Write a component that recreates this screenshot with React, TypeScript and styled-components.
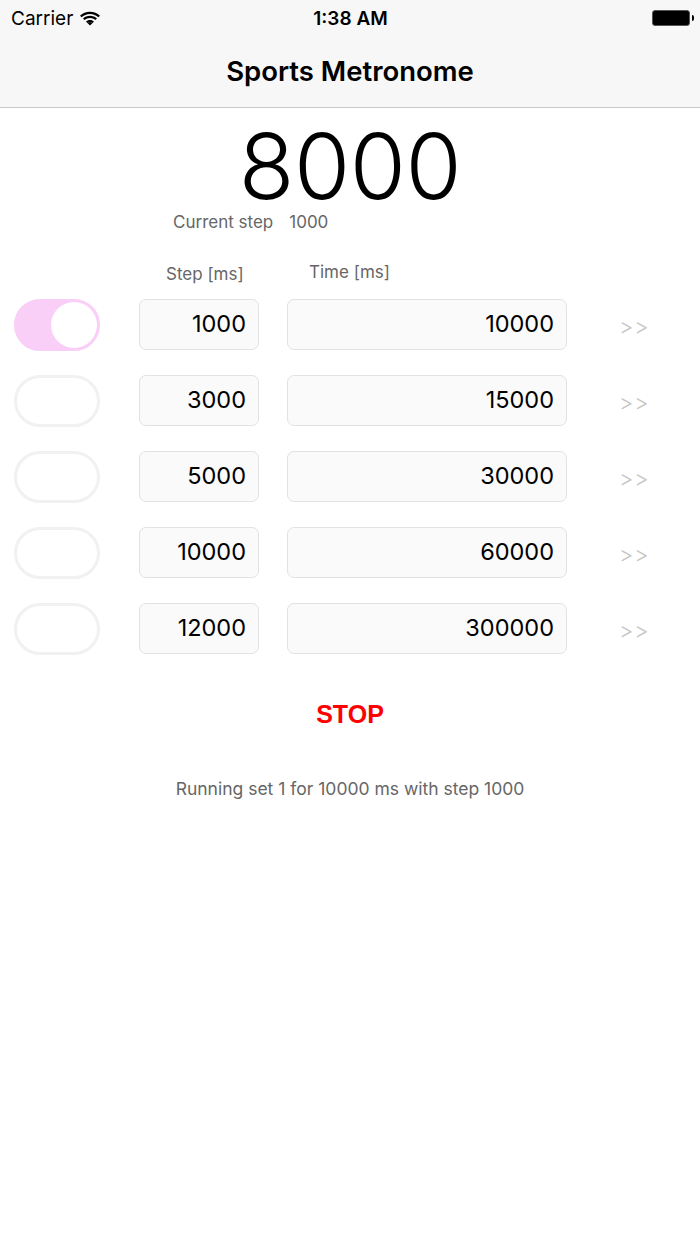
import React from "react";
import styled, { createGlobalStyle } from "styled-components";

const GlobalStyle = createGlobalStyle`
  body {
    margin: 0;
    background: #ffffff;
    font-family: Inter, "Liberation Sans", sans-serif;
  }
`;

const Screen = styled.div`
  width: 700px;
  min-height: 1244px;
  background: #fff;
`;

const Header = styled.div`
  background: #f7f7f7;
  border-bottom: 1px solid #c8c8c8;
  height: 107px;
  display: flex;
  flex-direction: column;
`;

const StatusBar = styled.div`
  height: 36px;
  display: grid;
  grid-template-columns: 1fr auto 1fr;
  align-items: center;
  padding: 0 10px 0 11px;
  font-size: 19px;
  color: #000;
`;

const Carrier = styled.div`
  display: flex;
  align-items: center;
  gap: 7px;
`;

const Clock = styled.div`
  font-weight: 600;
`;

const BatteryWrap = styled.div`
  display: flex;
  justify-content: flex-end;
  align-items: center;
`;

const Battery = styled.div`
  width: 36px;
  height: 14px;
  border: 1.5px solid #555;
  border-radius: 3px;
  background: #000;
  position: relative;
  &::after {
    content: "";
    position: absolute;
    right: -5px;
    top: 4px;
    width: 2px;
    height: 6px;
    background: #000;
    border-radius: 0 2px 2px 0;
  }
`;

const NavTitle = styled.div`
  flex: 1;
  display: flex;
  align-items: center;
  justify-content: center;
  font-size: 27.5px;
  font-weight: 600;
  color: #000;
  padding-bottom: 2px;
`;

const Counter = styled.div`
  text-align: center;
  font-size: 91px;
  font-weight: 300;
  line-height: 92px;
  height: 92px;
  padding-top: 12px;
  letter-spacing: -0.5px;
`;

const StepInfo = styled.div`
  display: flex;
  gap: 16px;
  padding-left: 173px;
  font-size: 17px;
  line-height: 20px;
  color: #666;
`;

const ColumnHeads = styled.div`
  display: flex;
  align-items: flex-start;
  padding-left: 166px;
  margin-top: 30px;
  font-size: 17px;
  color: #666;
`;

const ColHead = styled.div<{ $shift?: number; $width: number }>`
  width: ${(p) => p.$width}px;
  margin-top: ${(p) => p.$shift ?? 0}px;
`;

const Rows = styled.div`
  display: flex;
  flex-direction: column;
  gap: 25px;
  margin-top: 15px;
  padding-left: 14px;
`;

const Row = styled.div`
  display: flex;
  align-items: center;
  height: 51px;
`;

const Toggle = styled.div<{ $on: boolean }>`
  width: 86px;
  height: 52px;
  box-sizing: border-box;
  border-radius: 26px;
  border: 3px solid ${(p) => (p.$on ? "#f9cef7" : "#f1f1f1")};
  background: ${(p) => (p.$on ? "#f9cef7" : "#fff")};
  display: flex;
  justify-content: ${(p) => (p.$on ? "flex-end" : "flex-start")};
  align-items: center;
`;

const Knob = styled.div`
  width: 46px;
  height: 46px;
  border-radius: 50%;
  background: #fff;
`;

const Field = styled.div<{ $width: number; $gap: number }>`
  width: ${(p) => p.$width}px;
  margin-left: ${(p) => p.$gap}px;
  height: 51px;
  box-sizing: border-box;
  border: 1px solid #e2e2e2;
  border-radius: 7px;
  background: #fafafa;
  display: flex;
  align-items: center;
  justify-content: flex-end;
  padding-right: 12px;
  padding-bottom: 2px;
  font-size: 23.5px;
  color: #000;
`;

const Next = styled.div`
  margin-left: 52px;
  margin-top: 2px;
  font-size: 22px;
  font-weight: 300;
  color: #c4c4c4;
  letter-spacing: 1px;
`;

const Stop = styled.div`
  text-align: center;
  margin-top: 46px;
  font-family: "Liberation Sans", Arial, sans-serif;
  font-weight: 700;
  font-size: 25px;
  color: #ff0000;
`;

const Status = styled.div`
  text-align: center;
  margin-top: 49px;
  font-size: 17.5px;
  color: #666;
`;

const WifiIcon = () => (
  <svg width="20" height="15" viewBox="0 0 20 15">
    <path d="M10 3C6.7 3 3.8 4.3 1.6 6.3L0 4.7C2.6 2.2 6.1 0.8 10 0.8s7.4 1.4 10 3.9l-1.6 1.6C16.2 4.3 13.3 3 10 3z" fill="#000" />
    <path d="M10 7c-2.1 0-4 0.8-5.4 2.1L3 7.5C4.8 5.8 7.3 4.8 10 4.8s5.2 1 7 2.7l-1.6 1.6C14 7.8 12.1 7 10 7z" fill="#000" />
    <path d="M10 11c-1 0-1.9 0.4-2.6 1L10 14.6 12.6 12C11.9 11.4 11 11 10 11zM10 9c1.6 0 3 .6 4 1.6l-1.4 1.4-2.6-1-2.6 1L6 10.6C7 9.6 8.4 9 10 9z" fill="#000" />
  </svg>
);

const sets = [
  { step: 1000, time: 10000, on: true },
  { step: 3000, time: 15000, on: false },
  { step: 5000, time: 30000, on: false },
  { step: 10000, time: 60000, on: false },
  { step: 12000, time: 300000, on: false },
];

export default function App() {
  return (
    <Screen>
      <GlobalStyle />
      <Header>
        <StatusBar>
          <Carrier>
            Carrier <WifiIcon />
          </Carrier>
          <Clock>1:38 AM</Clock>
          <BatteryWrap>
            <Battery />
          </BatteryWrap>
        </StatusBar>
        <NavTitle>Sports Metronome</NavTitle>
      </Header>

      <Counter>8000</Counter>
      <StepInfo>
        <span>Current step</span>
        <span>1000</span>
      </StepInfo>

      <ColumnHeads>
        <ColHead $width={143} $shift={2}>
          Step [ms]
        </ColHead>
        <ColHead $width={100}>Time [ms]</ColHead>
      </ColumnHeads>

      <Rows>
        {sets.map((s, i) => (
          <Row key={i}>
            <Toggle $on={s.on}>{s.on && <Knob />}</Toggle>
            <Field $width={120} $gap={39}>
              {s.step}
            </Field>
            <Field $width={280} $gap={28}>
              {s.time}
            </Field>
            <Next>&gt;&gt;</Next>
          </Row>
        ))}
      </Rows>

      <Stop>STOP</Stop>
      <Status>Running set 1 for 10000 ms with step 1000</Status>
    </Screen>
  );
}
